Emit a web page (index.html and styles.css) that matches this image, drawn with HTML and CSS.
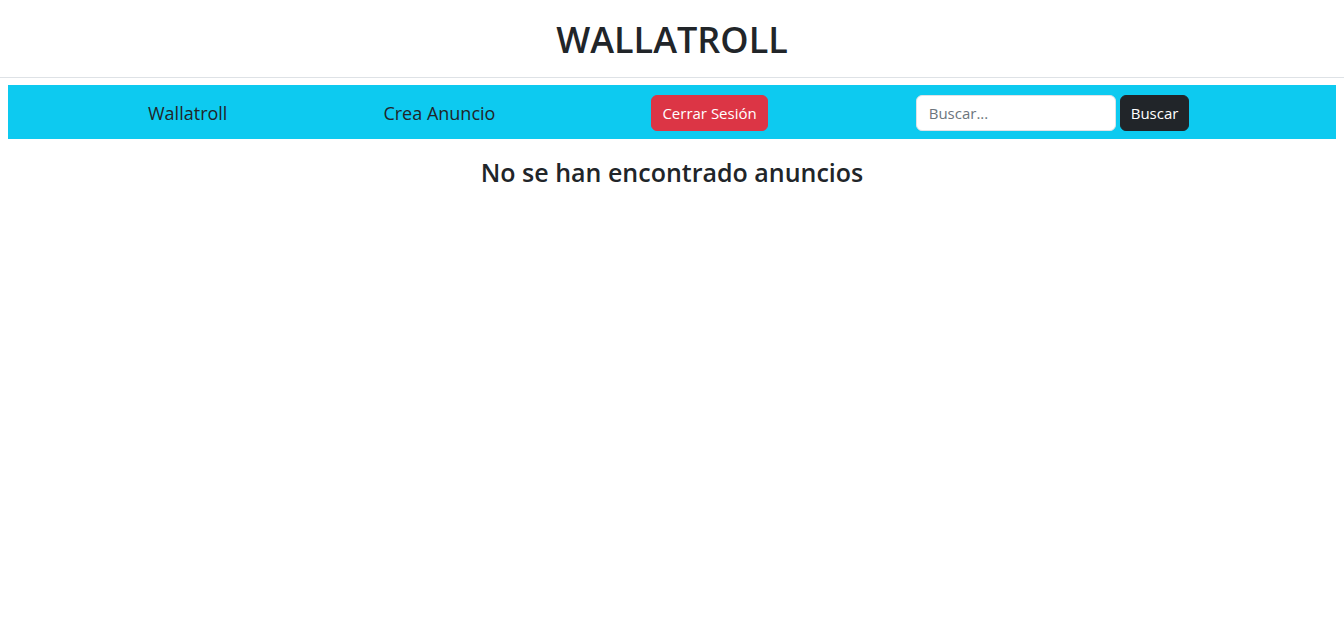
FILE: index.html
```html
<!DOCTYPE html>
<html lang="es">
<head>
<meta charset="utf-8">
<title>Wallatroll</title>
<link rel="stylesheet" href="styles.css">
</head>
<body>
<header class="site-header">
  <h1 class="site-title">WALLATROLL</h1>
</header>
<main class="main">
  <nav class="navbar">
    <a class="nav-link" href="#">Wallatroll</a>
    <a class="nav-link" href="#">Crea Anuncio</a>
    <button class="btn btn-danger" type="button">Cerrar Sesión</button>
    <form class="search-form">
      <input class="search-input" type="search" placeholder="Buscar...">
      <button class="btn btn-dark" type="submit">Buscar</button>
    </form>
  </nav>
  <h3 class="empty-msg">No se han encontrado anuncios</h3>
</main>
</body>
</html>
```
FILE: styles.css
```css
* { box-sizing: border-box; }
html, body { margin: 0; padding: 0; }
body {
  font-family: "Open Sans", "Noto Sans", sans-serif;
  color: #212529;
  background: #fff;
  font-size: 16px;
}
.site-header {
  border-bottom: 1px solid #dee2e6;
  height: 78px;
  display: flex;
  align-items: center;
  justify-content: center;
}
.site-title {
  margin: 0;
  font-size: 36px;
  font-weight: 600;
  line-height: 1.2;
  padding-top: 2px;
}
.main {
  padding: 7px 8px 0;
}
.navbar {
  background: #0dcaf0;
  height: 54px;
  padding: 2px 0 0 140px;
  display: flex;
  align-items: center;
  justify-content: flex-start;
  gap: 156px;
}
.nav-link {
  color: #212529;
  text-decoration: none;
  font-size: 18px;
}
.btn {
  font-family: inherit;
  font-size: 15px;
  border: 1px solid transparent;
  border-radius: 6px;
  height: 36px;
  padding: 0 10px;
  color: #fff;
  cursor: pointer;
}
.btn-danger { background: #dc3545; border-color: #dc3545; }
.btn-dark { background: #212529; border-color: #212529; }
.search-form {
  display: flex;
  gap: 4px;
  margin-left: -8px;
}
.search-input {
  width: 200px;
  height: 36px;
  border: 1px solid #dee2e6;
  border-radius: 6px;
  padding: 0 12px;
  font-family: inherit;
  font-size: 15px;
  color: #212529;
}
.search-input::placeholder { color: #6c757d; }
.empty-msg {
  margin: 18px 0 0;
  text-align: center;
  font-size: 25px;
  font-weight: 600;
  line-height: 1.2;
}
```
